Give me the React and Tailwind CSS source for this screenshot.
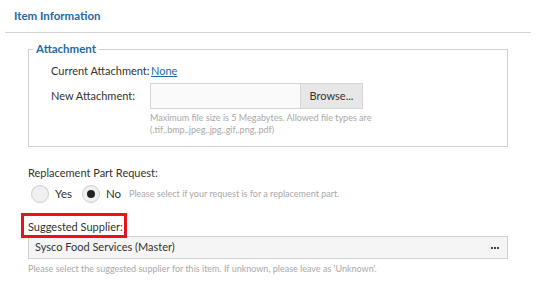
import React from "react";

const font = { fontFamily: 'Lato, "Open Sans", sans-serif' };

const Radio = ({ checked, label }) => (
  <label className="flex items-center gap-[6px]">
    <span className="flex h-[18px] w-[18px] items-center justify-center rounded-full border border-[#cfcfcf] bg-[#f0f0f0]">
      {checked && <span className="h-[8px] w-[8px] rounded-full bg-[#222]" />}
    </span>
    <span className="text-[11.5px] text-[#333]">{label}</span>
  </label>
);

export default function App() {
  return (
    <div className="h-[290px] w-[539px] overflow-hidden bg-white text-[#333]" style={font}>
      <div className="px-[14px] pt-[8px] pb-[8px] text-[11.5px] leading-[16px] font-bold text-[#1e6aa6]">
        Item Information
      </div>
      <div className="mx-[5px] w-[526px] border-t border-[#d4d4d4]" />

      <div className="pl-[28px] pr-[31px]">
        <fieldset className="mt-[9px] h-[105px] border border-[#d0d0d0] px-[22px] pt-[7px]">
          <legend className="ml-[-18px] px-[3px] text-[11.5px] font-bold leading-[14px] text-[#1e6aa6]">
            Attachment
          </legend>
          <div className="flex items-center whitespace-nowrap text-[11px] leading-[16px]">
            <span className="w-[100px]">Current Attachment:</span>
            <a className="text-[#1e6aa6] underline">None</a>
          </div>
          <div className="mt-[4px] flex whitespace-nowrap text-[11px]">
            <span className="w-[99px] pt-[5px] leading-[16px]">New Attachment:</span>
            <div>
              <div className="flex h-[26px]">
                <div className="w-[151px] border border-[#d6d6d6] bg-[#fafafa]" />
                <div className="flex w-[62px] items-center justify-center border border-l-0 border-[#d6d6d6] bg-[#e7e7e7] text-[11px]">
                  Browse...
                </div>
              </div>
              <p className="mt-[3px] w-[240px] whitespace-normal text-[9px] leading-[12px] text-[#a9a9a9]">
                Maximum file size is 5 Megabytes. Allowed file types are (.tif,.bmp,.jpeg,.jpg,.gif,.png,.pdf)
              </p>
            </div>
          </div>
        </fieldset>

        <div className="mt-[18px] text-[11px] leading-[16px]">Replacement Part Request:</div>
        <div className="mt-[4px] flex items-center gap-[10px] pl-[3px] whitespace-nowrap">
          <Radio label="Yes" />
          <Radio checked label="No" />
          <span className="ml-[-2px] text-[9px] text-[#a9a9a9]">
            Please select if your request is for a replacement part.
          </span>
        </div>

        <div className="relative mt-[16px]">
          <div className="text-[11px] leading-[16px]">Suggested Supplier:</div>
          <div className="pointer-events-none absolute left-[-7px] top-[-6px] h-[25px] w-[106px] border-[3px] border-[#e8141c]" />
          <div className="mt-[1px] flex h-[23px] w-[480px] items-center justify-between border border-[#d0d0d0] bg-[#f5f5f5] pl-[6px] pr-[8px] text-[11px]">
            <span>Sysco Food Services (Master)</span>
            <span className="flex gap-[1px]">
              <span className="h-[2px] w-[2px] bg-[#444]" />
              <span className="h-[2px] w-[2px] bg-[#444]" />
              <span className="h-[2px] w-[2px] bg-[#444]" />
            </span>
          </div>
          <div className="mt-[3px] text-[9px] leading-[14px] text-[#a9a9a9]">
            Please select the suggested supplier for this item. If unknown, please leave as 'Unknown'.
          </div>
        </div>
      </div>
    </div>
  );
}
